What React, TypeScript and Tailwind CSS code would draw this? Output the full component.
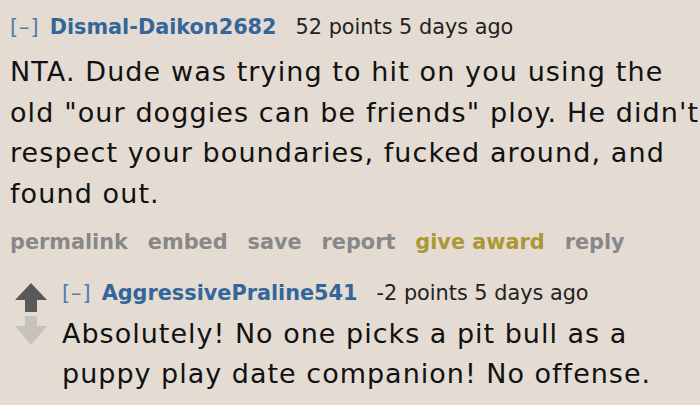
const lines1 = [
  "NTA. Dude was trying to hit on you using the",
  'old "our doggies can be friends" ploy. He didn\'t',
  "respect your boundaries, fucked around, and",
  "found out.",
];

const lines2 = [
  "Absolutely! No one picks a pit bull as a",
  "puppy play date companion! No offense.",
];

function Header({ name, points }: { name: string; points: string }) {
  return (
    <div className="flex items-baseline text-[20.8px] leading-[28px] whitespace-nowrap">
      <span className="text-[#5479ab] mr-[10px] tracking-[1px]">[–]</span>
      <span className="font-bold text-[#336699] mr-[19px]">{name}</span>
      <span className="text-[#222]">{points}</span>
    </div>
  );
}

export default function App() {
  return (
    <div
      className="w-[700px] h-[405px] overflow-hidden bg-[#e4dcd3] text-[#111]"
      style={{ fontFamily: '"DejaVu Sans", Verdana, sans-serif' }}
    >
      <div className="pl-[10px] pt-[13px]">
        <Header name="Dismal-Daikon2682" points="52 points 5 days ago" />
        <div className="text-[27px] leading-[40.5px] mt-[11px] tracking-[1.1px] whitespace-nowrap">
          {lines1.map((l) => (
            <div key={l}>{l}</div>
          ))}
        </div>
        <div className="flex gap-[20px] text-[20.8px] font-bold text-[#888] mt-[14px] leading-[28px]">
          <span>permalink</span>
          <span>embed</span>
          <span>save</span>
          <span>report</span>
          <span className="text-[#ab9834]">give award</span>
          <span>reply</span>
        </div>
        <div className="flex mt-[23px]">
          <div className="w-[32px] ml-[5px] pt-[4px]">
            <svg width="32" height="63" viewBox="0 0 32 63">
              <path d="M16 0 L32 17 L22 17 L22 29 L10 29 L10 17 L0 17 Z" fill="#595959" />
              <path d="M10 33 L22 33 L22 43 L32 43 L16 62 L0 43 L10 43 Z" fill="#c7c2bc" />
            </svg>
          </div>
          <div className="ml-[15px]">
            <Header name="AggressivePraline541" points="-2 points 5 days ago" />
            <div className="text-[27px] leading-[40px] mt-[7px] tracking-[1px] whitespace-nowrap">
              {lines2.map((l) => (
                <div key={l}>{l}</div>
              ))}
            </div>
          </div>
        </div>
      </div>
    </div>
  );
}
